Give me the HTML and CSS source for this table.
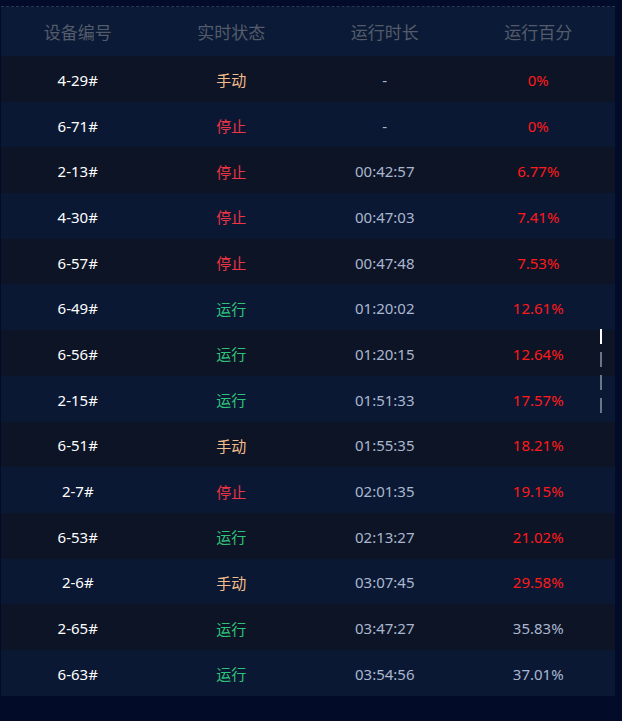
FILE: index.html
```html
<!DOCTYPE html>
<html lang="zh">
<head>
<meta charset="utf-8">
<link rel="stylesheet" href="styles.css">
</head>
<body>
<div class="panel">
  <div class="thead">
    <div>设备编号</div><div>实时状态</div><div>运行时长</div><div>运行百分</div>
  </div>
  <div class="tbody">
    <div class="row"><div class="id">4-29#</div><div class="manual">手动</div><div class="time">-</div><div class="pct red">0%</div></div>
    <div class="row"><div class="id">6-71#</div><div class="stop">停止</div><div class="time">-</div><div class="pct red">0%</div></div>
    <div class="row"><div class="id">2-13#</div><div class="stop">停止</div><div class="time">00:42:57</div><div class="pct red">6.77%</div></div>
    <div class="row"><div class="id">4-30#</div><div class="stop">停止</div><div class="time">00:47:03</div><div class="pct red">7.41%</div></div>
    <div class="row"><div class="id">6-57#</div><div class="stop">停止</div><div class="time">00:47:48</div><div class="pct red">7.53%</div></div>
    <div class="row"><div class="id">6-49#</div><div class="run">运行</div><div class="time">01:20:02</div><div class="pct red">12.61%</div></div>
    <div class="row"><div class="id">6-56#</div><div class="run">运行</div><div class="time">01:20:15</div><div class="pct red">12.64%</div></div>
    <div class="row"><div class="id">2-15#</div><div class="run">运行</div><div class="time">01:51:33</div><div class="pct red">17.57%</div></div>
    <div class="row"><div class="id">6-51#</div><div class="manual">手动</div><div class="time">01:55:35</div><div class="pct red">18.21%</div></div>
    <div class="row"><div class="id">2-7#</div><div class="stop">停止</div><div class="time">02:01:35</div><div class="pct red">19.15%</div></div>
    <div class="row"><div class="id">6-53#</div><div class="run">运行</div><div class="time">02:13:27</div><div class="pct red">21.02%</div></div>
    <div class="row"><div class="id">2-6#</div><div class="manual">手动</div><div class="time">03:07:45</div><div class="pct red">29.58%</div></div>
    <div class="row"><div class="id">2-65#</div><div class="run">运行</div><div class="time">03:47:27</div><div class="pct">35.83%</div></div>
    <div class="row"><div class="id">6-63#</div><div class="run">运行</div><div class="time">03:54:56</div><div class="pct">37.01%</div></div>
  </div>
  <div class="pager">
    <span class="dash on"></span><span class="dash"></span><span class="dash"></span><span class="dash"></span>
  </div>
</div>
</body>
</html>
```
FILE: styles.css
```css
html, body {
  margin: 0;
  padding: 0;
  background: #020c28;
  height: 100%;
}
body {
  font-family: "Noto Sans", "Noto Sans CJK SC", sans-serif;
  font-size: 15px;
}
.panel {
  position: relative;
  width: 614px;
  margin: 6px 0 0 1px;
  border-top: 1px dashed #2a3857;
}
.thead, .row {
  display: grid;
  grid-template-columns: repeat(4, 1fr);
  align-items: center;
  text-align: center;
}
.thead {
  height: 49px;
  background: #0b1a36;
  color: #545c6b;
  font-size: 17px;
}
.thead > div { padding-bottom: 1px; }
.row {
  height: 45.7px;
  color: #a9b7cf;
}
.row > div { padding-top: 2px; }
.row:nth-child(odd) { background: #0d1426; }
.row:nth-child(even) { background: #0b1834; }
.id { color: #ffffff; }
.manual { color: #f2bd8a; }
.stop { color: #ee3445; }
.run { color: #2fc37a; }
.time { color: #a9b7cf; }
.red { color: #ff1a1a; }
.pager {
  position: absolute;
  left: 599px;
  top: 322px;
  display: flex;
  flex-direction: column;
  gap: 8px;
}
.dash {
  display: block;
  width: 2px;
  height: 15px;
  background: #6a7588;
}
.dash.on { background: #ffffff; }
```
